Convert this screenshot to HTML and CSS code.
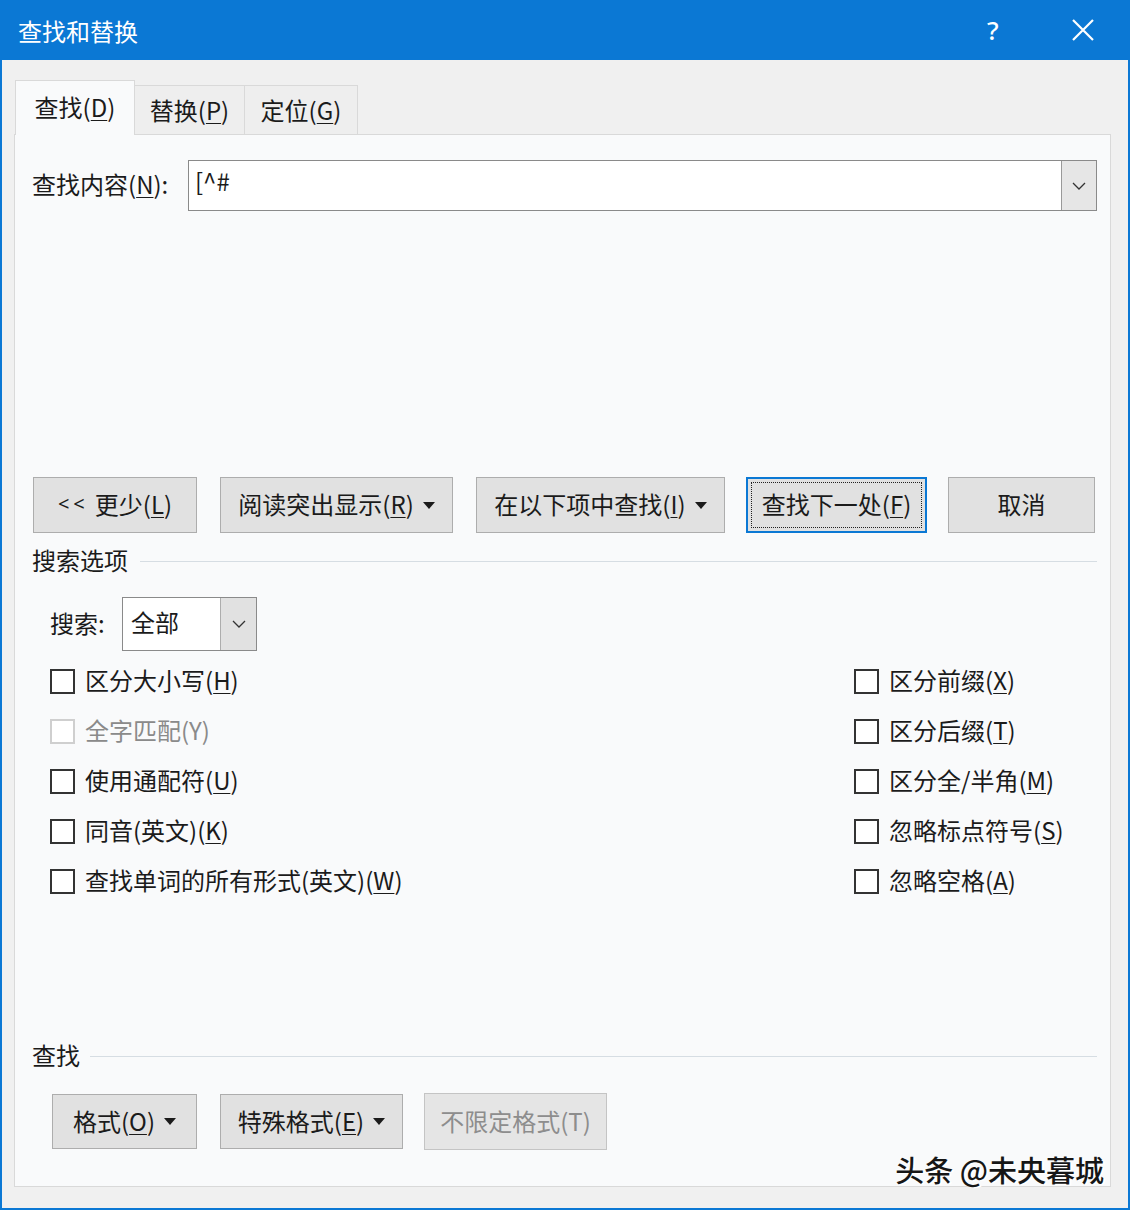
FILE: index.html
```html
<!DOCTYPE html>
<html lang="zh-CN">

<head>
    <meta charset="UTF-8">
    <title>查找和替换</title>
    <link rel="stylesheet" href="styles.css">
</head>

<body>
    <div class="window">
        <!-- 제목줄 -->
        <div class="titlebar">
            <span class="title">查找和替换</span>
            <span class="help">?</span>
            <span class="close">
                <svg width="22" height="22" viewBox="0 0 22 22">
                    <path d="M1 1 L21 21 M21 1 L1 21" stroke="#fff" stroke-width="2.2" fill="none" />
                </svg>
            </span>
        </div>

        <div class="body">
            <!-- 탭 -->
            <div class="tabs">
                <div class="tab active">查找(<u>D</u>)</div>
                <div class="tab tab2">替换(<u>P</u>)</div>
                <div class="tab tab3">定位(<u>G</u>)</div>
            </div>

            <div class="panel">
                <div class="find-row">
                    <span class="label">查找内容(<u>N</u>):</span>
                    <div class="combo">
                        <span class="value">[^#</span>
                        <span class="drop">
                            <svg width="14" height="8" viewBox="0 0 14 8">
                                <polyline points="1,1 7,7 13,1" stroke="#333" stroke-width="1.3" fill="none" />
                            </svg>
                        </span>
                    </div>
                </div>

                <div class="actions">
                    <div class="btn b-less"><span class="lt">&lt;&lt;</span> 更少(<u>L</u>)</div>
                    <div class="btn b-read">阅读突出显示(<u>R</u>)<i class="tri"></i></div>
                    <div class="btn b-in">在以下项中查找(<u>I</u>)<i class="tri"></i></div>
                    <div class="btn b-next focus">查找下一处(<u>F</u>)</div>
                    <div class="btn b-cancel">取消</div>
                </div>

                <div class="group-title"><span>搜索选项</span></div>

                <div class="search-row">
                    <span class="label">搜索:</span>
                    <div class="select">
                        <span class="value">全部</span>
                        <span class="drop">
                            <svg width="14" height="8" viewBox="0 0 14 8">
                                <polyline points="1,1 7,7 13,1" stroke="#333" stroke-width="1.3" fill="none" />
                            </svg>
                        </span>
                    </div>
                </div>

                <!-- 체크박스 2열 -->
                <div class="options">
                    <div class="opt"><i class="box"></i><span>区分大小写(<u>H</u>)</span></div>
                    <div class="opt"><i class="box"></i><span>区分前缀(<u>X</u>)</span></div>
                    <div class="opt disabled"><i class="box"></i><span>全字匹配(Y)</span></div>
                    <div class="opt"><i class="box"></i><span>区分后缀(<u>T</u>)</span></div>
                    <div class="opt"><i class="box"></i><span>使用通配符(<u>U</u>)</span></div>
                    <div class="opt"><i class="box"></i><span>区分全/半角(<u>M</u>)</span></div>
                    <div class="opt"><i class="box"></i><span>同音(英文)(<u>K</u>)</span></div>
                    <div class="opt"><i class="box"></i><span>忽略标点符号(<u>S</u>)</span></div>
                    <div class="opt"><i class="box"></i><span>查找单词的所有形式(英文)(<u>W</u>)</span></div>
                    <div class="opt"><i class="box"></i><span>忽略空格(<u>A</u>)</span></div>
                </div>

                <div class="group-title find-title"><span>查找</span></div>

                <div class="format-row">
                    <div class="btn b-fmt">格式(<u>O</u>)<i class="tri"></i></div>
                    <div class="btn b-special">特殊格式(<u>E</u>)<i class="tri"></i></div>
                    <div class="btn b-nofmt disabled">不限定格式(T)</div>
                </div>

                <div class="watermark">头条 @未央暮城</div>
            </div>
        </div>
    </div>
</body>

</html>
```

FILE: styles.css
```css
/* 기본 */
html,
body {
    margin: 0;
    padding: 0;
}

body {
    font-family: "Noto Sans CJK SC", "Noto Sans", sans-serif;
    font-size: 24px;
    color: #1b1b1b;
    background: #f0f0f0;
}

u {
    text-decoration-thickness: 1px;
    text-underline-offset: 3px;
}

/* 창 전체 */
.window {
    width: 1130px;
    height: 1210px;
    box-sizing: border-box;
    border: 2px solid #0b78d4;
    border-top: 0;
    background: #f0f0f0;
    display: flex;
    flex-direction: column;
}

/* 제목줄 */
.titlebar {
    height: 60px;
    flex-shrink: 0;
    background: #0b78d4;
    color: #fff;
    display: flex;
    align-items: center;
    padding-left: 16px;
}

.title {
    font-size: 24px;
    line-height: 1;
    flex: 1;
    margin-top: 1px;
}

.help {
    font-family: "Noto Sans", sans-serif;
    font-size: 26px;
    font-weight: 500;
    line-height: 1;
    width: 24px;
    margin-right: 61px;
}

.close {
    display: flex;
    margin-right: 34px;
}

/* 본문 */
.body {
    flex: 1;
    display: flex;
    flex-direction: column;
    padding: 20px 17px 21px 12px;
}

/* 탭 */
.tabs {
    display: flex;
    align-items: flex-end;
    height: 54px;
    padding-left: 1px;
}

.tab {
    height: 49px;
    box-sizing: border-box;
    border: 1px solid #d9d9d9;
    border-bottom: 0;
    border-left: 0;
    background: #eeeeee;
    display: flex;
    align-items: center;
    justify-content: center;
    line-height: 1;
}

.tab.active {
    width: 120px;
    height: 55px;
    margin-bottom: -1px;
    border-left: 1px solid #d9d9d9;
    background: #f9fafb;
    position: relative;
    z-index: 1;
    padding-bottom: 3px;
}

.tab2 {
    width: 110px;
}

.tab3 {
    width: 113px;
}

.panel {
    flex: 1;
    border: 1px solid #d9d9d9;
    background: #f9fafb;
    padding: 0 13px 0 17px;
    position: relative;
    display: flex;
    flex-direction: column;
}

/* 찾을 내용 */
.find-row {
    display: flex;
    align-items: center;
    margin-top: 25px;
}

.label {
    line-height: 1;
}

.find-row .label {
    width: 156px;
    padding-bottom: 3px;
}

.combo {
    flex: 1;
    height: 51px;
    box-sizing: border-box;
    border: 1px solid #8a8a8a;
    background: #fff;
    display: flex;
    align-items: stretch;
}

.combo .value {
    flex: 1;
    padding: 8px 0 0 6px;
    line-height: 1;
}

.drop {
    width: 34px;
    background: #e6e6e6;
    border-left: 1px solid #999;
    display: flex;
    align-items: center;
    justify-content: center;
}

/* 버튼 공통 */
.btn {
    height: 56px;
    box-sizing: border-box;
    border: 1px solid #adadad;
    background: #e1e1e1;
    display: flex;
    align-items: center;
    justify-content: center;
    line-height: 1;
    flex-shrink: 0;
    padding-bottom: 2px;
}

.btn.focus {
    border: 2px solid #0b78d4;
    outline: 1px dotted #222;
    outline-offset: -6px;
}

.btn.disabled {
    color: #8d8d8d;
    border-color: #c4c4c4;
    background: #e5e5e5;
}

/* 드롭다운 세모 */
.tri {
    width: 0;
    height: 0;
    border-left: 6px solid transparent;
    border-right: 6px solid transparent;
    border-top: 7px solid #1b1b1b;
    margin-left: 9px;
    margin-top: 2px;
}

.lt {
    font-family: "Noto Sans", sans-serif;
    font-size: 20px;
    letter-spacing: 4px;
    margin-right: 6px;
}

.actions {
    display: flex;
    margin-top: 266px;
    padding-left: 1px;
}

.b-less {
    width: 164px;
}

.b-read {
    width: 233px;
    margin-left: 23px;
}

.b-in {
    width: 249px;
    margin-left: 23px;
}

.b-next {
    width: 181px;
    margin-left: 21px;
}

.b-cancel {
    width: 147px;
    margin-left: 21px;
}

/* 그룹 제목 + 선 */
.group-title {
    height: 30px;
    display: flex;
    align-items: center;
    margin-top: 13px;
    line-height: 1;
}

.group-title span {
    padding-bottom: 2px;
}

.group-title::after {
    content: "";
    flex: 1;
    height: 1px;
    background: #d6dde3;
    margin-left: 12px;
}

.find-title {
    margin-top: 135px;
}

.find-title::after {
    margin-left: 10px;
}

/* 검색 방향 */
.search-row {
    display: flex;
    align-items: center;
    margin-top: 21px;
    padding-left: 18px;
}

.search-row .label {
    width: 72px;
    padding-bottom: 3px;
}

.select {
    width: 135px;
    height: 54px;
    box-sizing: border-box;
    border: 1px solid #8a8a8a;
    background: #fff;
    display: flex;
    align-items: stretch;
}

.select .value {
    flex: 1;
    display: flex;
    align-items: center;
    padding: 0 0 4px 8px;
    line-height: 1;
}

.select .drop {
    width: 35px;
    background: #e1e1e1;
    border-left: 1px solid #adadad;
}

/* 체크박스 */
.options {
    display: grid;
    grid-template-columns: 804px auto;
    grid-auto-rows: 50px;
    margin-top: 5px;
    padding-left: 18px;
}

.opt {
    display: flex;
    align-items: center;
    line-height: 1;
}

.opt span {
    padding-bottom: 3px;
}

.box {
    width: 25px;
    height: 25px;
    box-sizing: border-box;
    border: 2px solid #333;
    background: #fff;
    margin-right: 10px;
}

.opt.disabled {
    color: #8a8a8a;
}

.opt.disabled .box {
    border-color: #cfcfcf;
}

/* 서식 버튼 */
.format-row {
    display: flex;
    align-items: center;
    margin-top: 22px;
    padding-left: 20px;
}

.b-fmt {
    width: 145px;
    height: 55px;
}

.b-special {
    width: 183px;
    height: 55px;
    margin-left: 23px;
}

.b-nofmt {
    width: 183px;
    height: 57px;
    margin-left: 21px;
}

/* 워터마크 (겹쳐 올림) */
.watermark {
    position: absolute;
    right: 6px;
    bottom: 0;
    font-size: 29px;
    font-weight: 500;
    line-height: 1.1;
    color: #161616;
    text-shadow: 2px 1px 0 #fff;
}
```
